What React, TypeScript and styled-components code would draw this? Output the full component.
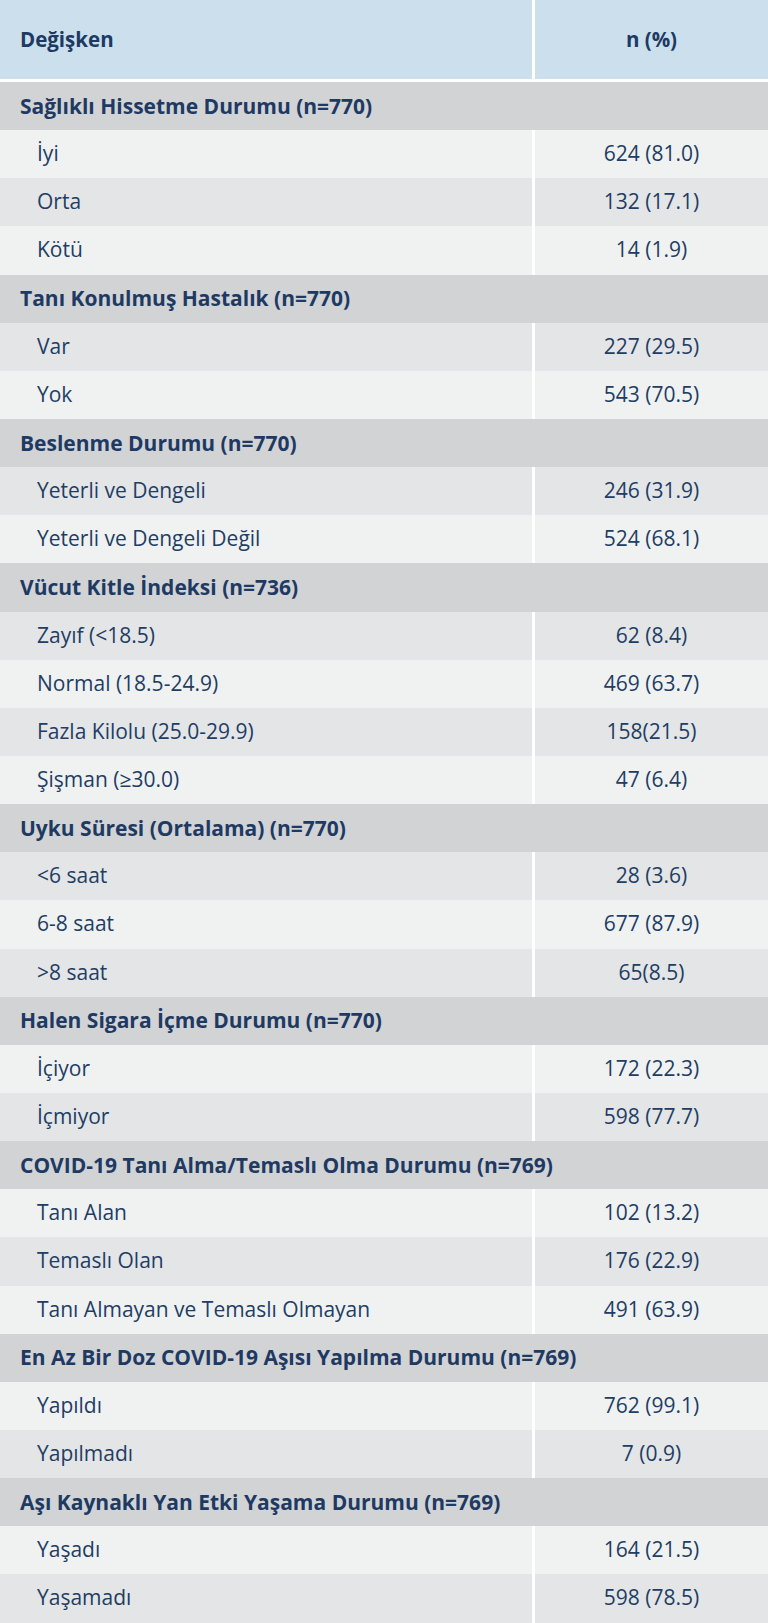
import * as React from 'react';
import styled, { createGlobalStyle } from 'styled-components';

const GlobalStyle = createGlobalStyle`
    html, body {
        margin: 0;
        padding: 0;
        background: #FFFFFF;
    }
    body {
        font-family: "Open Sans", "Noto Sans", sans-serif;
        color: #1E3A63;
    }
`

const Table = styled.div`
    width: 768px;
    display: flex;
    flex-direction: column;
    background: #FFFFFF;
`

const HeaderRow = styled.div`
    display: grid;
    grid-template-columns: 532px 1fr;
    column-gap: 3px;
    height: 79px;
    margin-bottom: 3px;
`

const HeaderCell = styled.div<{ align?: string }>`
    background: #CBDFEC;
    display: flex;
    align-items: center;
    justify-content: ${p => (p.align === 'center' ? 'center' : 'flex-start')};
    padding-left: ${p => (p.align === 'center' ? '0' : '20px')};
    font-size: 20.5px;
    font-weight: 700;
    padding-bottom: 2px;
`

const SectionRow = styled.div`
    height: 48.15px;
    background: #D2D3D5;
    display: flex;
    align-items: center;
    padding-left: 20px;
    padding-bottom: 1px;
    font-size: 21px;
    font-weight: 700;
    box-sizing: border-box;
    white-space: nowrap;
`

const DataRow = styled.div`
    display: grid;
    grid-template-columns: 532px 1fr;
    column-gap: 3px;
    height: 48.15px;
`

const Cell = styled.div<{ light: boolean; center?: boolean }>`
    background: ${p => (p.light ? '#F0F2F2' : '#E4E5E7')};
    display: flex;
    align-items: center;
    justify-content: ${p => (p.center ? 'center' : 'flex-start')};
    padding-left: ${p => (p.center ? '0' : '37px')};
    padding-bottom: 2px;
    box-sizing: border-box;
    font-size: 21px;
    font-weight: 400;
    color: #223D63;
    white-space: nowrap;
`

type Item = { label: string; value: string; light: boolean }
type Section = { title: string; items: Item[] }

const sections: Section[] = [
    {
        title: 'Sağlıklı Hissetme Durumu (n=770)',
        items: [
            { label: 'İyi', value: '624 (81.0)', light: true },
            { label: 'Orta', value: '132 (17.1)', light: false },
            { label: 'Kötü', value: '14 (1.9)', light: true },
        ],
    },
    {
        title: 'Tanı Konulmuş Hastalık (n=770)',
        items: [
            { label: 'Var', value: '227 (29.5)', light: false },
            { label: 'Yok', value: '543 (70.5)', light: true },
        ],
    },
    {
        title: 'Beslenme Durumu (n=770)',
        items: [
            { label: 'Yeterli ve Dengeli', value: '246 (31.9)', light: false },
            { label: 'Yeterli ve Dengeli Değil', value: '524 (68.1)', light: true },
        ],
    },
    {
        title: 'Vücut Kitle İndeksi (n=736)',
        items: [
            { label: 'Zayıf (<18.5)', value: '62 (8.4)', light: false },
            { label: 'Normal (18.5-24.9)', value: '469 (63.7)', light: true },
            { label: 'Fazla Kilolu (25.0-29.9)', value: '158(21.5)', light: false },
            { label: 'Şişman (≥30.0)', value: '47 (6.4)', light: true },
        ],
    },
    {
        title: 'Uyku Süresi (Ortalama) (n=770)',
        items: [
            { label: '<6 saat', value: '28 (3.6)', light: false },
            { label: '6-8 saat', value: '677 (87.9)', light: true },
            { label: '>8 saat', value: '65(8.5)', light: false },
        ],
    },
    {
        title: 'Halen Sigara İçme Durumu (n=770)',
        items: [
            { label: 'İçiyor', value: '172 (22.3)', light: true },
            { label: 'İçmiyor', value: '598 (77.7)', light: false },
        ],
    },
    {
        title: 'COVID-19 Tanı Alma/Temaslı Olma Durumu (n=769)',
        items: [
            { label: 'Tanı Alan', value: '102 (13.2)', light: true },
            { label: 'Temaslı Olan', value: '176 (22.9)', light: false },
            { label: 'Tanı Almayan ve Temaslı Olmayan', value: '491 (63.9)', light: true },
        ],
    },
    {
        title: 'En Az Bir Doz COVID-19 Aşısı Yapılma Durumu (n=769)',
        items: [
            { label: 'Yapıldı', value: '762 (99.1)', light: true },
            { label: 'Yapılmadı', value: '7 (0.9)', light: false },
        ],
    },
    {
        title: 'Aşı Kaynaklı Yan Etki Yaşama Durumu (n=769)',
        items: [
            { label: 'Yaşadı', value: '164 (21.5)', light: true },
            { label: 'Yaşamadı', value: '598 (78.5)', light: false },
        ],
    },
]

export default function App() {
    return (
        <>
            <GlobalStyle />
            <Table>
                <HeaderRow>
                    <HeaderCell>Değişken</HeaderCell>
                    <HeaderCell align="center">n (%)</HeaderCell>
                </HeaderRow>
                {sections.map(section => (
                    <React.Fragment key={section.title}>
                        <SectionRow>{section.title}</SectionRow>
                        {section.items.map(item => (
                            <DataRow key={item.label}>
                                <Cell light={item.light}>{item.label}</Cell>
                                <Cell light={item.light} center>
                                    {item.value}
                                </Cell>
                            </DataRow>
                        ))}
                    </React.Fragment>
                ))}
            </Table>
        </>
    )
}
